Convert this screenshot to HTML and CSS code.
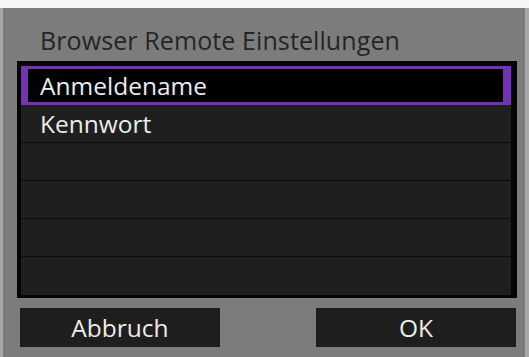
FILE: index.html
```html
<!DOCTYPE html>
<html lang="de">
<head>
<meta charset="utf-8">
<title>Browser Remote Einstellungen</title>
<link rel="stylesheet" href="styles.css">
</head>
<body>
<div class="frame">
  <div class="screen">
    <div class="title">Browser Remote Einstellungen</div>
    <div class="list">
      <div class="row selected">Anmeldename</div>
      <div class="row">Kennwort</div>
      <div class="row"></div>
      <div class="row"></div>
      <div class="row"></div>
      <div class="row last"></div>
    </div>
    <div class="buttons">
      <div class="btn">Abbruch</div>
      <div class="btn">OK</div>
    </div>
  </div>
</div>
</body>
</html>
```
FILE: styles.css
```css
html, body {
  margin: 0;
  padding: 0;
  background: #f6f6f6;
  width: 529px;
  height: 357px;
  overflow: hidden;
  font-family: "Open Sans", "Noto Sans", sans-serif;
}
.frame {
  margin-top: 8px;
  height: 349px;
  background: #a8a8a8;
  padding: 0 4px 0 3px;
}
.screen {
  height: 349px;
  background: #7c7c7c;
  display: flex;
  flex-direction: column;
  padding: 17px 8px 0 14px;
  box-sizing: border-box;
}
.title {
  font-size: 25px;
  line-height: 31px;
  color: #252525;
  padding-left: 23px;
  height: 36px;
  letter-spacing: 0.1px;
  white-space: nowrap;
}
.list {
  width: 500px;
  box-sizing: border-box;
  background: #050505;
  border-style: solid;
  border-color: #050505;
  border-width: 5px 6px 3px 4px;
  display: flex;
  flex-direction: column;
}
.row {
  height: 38px;
  box-sizing: border-box;
  background: #1f1f1f;
  border-bottom: 1px solid #0c0c0c;
  color: #ececec;
  font-size: 24.5px;
  font-weight: 500;
  display: flex;
  align-items: center;
  padding-left: 19px;
}
.row.last {
  border-bottom: none;
}
.row.selected {
  background: #000;
  border: solid #7233b8;
  border-width: 3px 8px 3px 7px;
  padding-left: 12px;
  height: 39px;
}
.buttons {
  display: flex;
  justify-content: space-between;
  margin-top: 10px;
  padding-left: 3px;
  width: 496px;
}
.btn {
  width: 200px;
  height: 39px;
  background: #1e1e1e;
  color: #ececec;
  font-size: 24.5px;
  font-weight: 500;
  display: flex;
  align-items: center;
  justify-content: center;
  box-sizing: border-box;
}
```
